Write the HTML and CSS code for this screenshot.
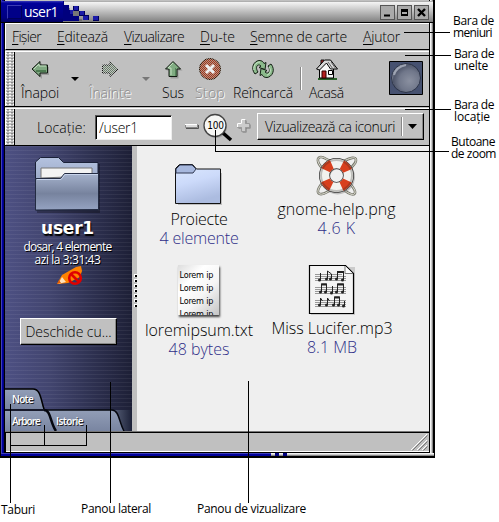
FILE: index.html
```html
<!DOCTYPE html>
<html lang="ro">
<head>
<meta charset="utf-8">
<title>user1</title>
<link rel="stylesheet" href="styles.css">
</head>
<body>
<div class="window">
  <header class="titlebar">
    <div class="title-tab"><i class="title-square"></i><span class="fit" data-w="34">user1</span></div>
    <svg class="title-blocks" width="40" height="20" viewBox="0 0 40 20" shape-rendering="crispEdges">
      <path d="M2 7h5v5h6v6h6v4H0V0z" fill="#555" opacity=".55"/>
      <path d="M0 0h1v4h5v5h4v5h6v6H0z" fill="#00007e"/>
      <path d="M10 5h6v5h-6zM16 10h6v5h-6zM20 14h6v5h-6zM30 15h6v5h-6z" fill="#00005a"/>
      <path d="M11 5h4v4h-4zM17 10h4v4h-4zM20 15h5v4h-5zM30 15h5v4h-5zM7 9h4v4H7z" fill="#1c1ca8"/>
      <path d="M10 10h6v5h-6z" fill="#777"/>
    </svg>
    <div class="win-buttons">
      <svg width="15" height="15"><path d="M4 10.500h6" stroke="#000" stroke-width="2"/></svg>
      <svg width="15" height="15"><path d="M4 4h7v7H4zM5 7v2h5V7z" fill="#000" fill-rule="evenodd"/></svg>
      <svg width="15" height="15"><path d="M4 4l7 7M11 4l-7 7" stroke="#000" stroke-width="2.400"/></svg>
    </div>
  </header>

  <nav class="menubar">
    <span class="fit" data-w="29"><u>F</u>işier</span>
    <span class="fit" data-w="51"><u>E</u>ditează</span>
    <span class="fit" data-w="60"><u>V</u>izualizare</span>
    <span class="fit" data-w="35"><u>D</u>u-te</span>
    <span class="fit" data-w="97"><u>S</u>emne de carte</span>
    <span class="fit" data-w="37"><u>A</u>jutor</span>
  </nav>

  <div class="bar toolbar">
    <div class="grip"></div>
    <div class="tool back">
      <svg width="24" height="24"><path d="M4.500 12.500l8-8v4h7v8h-7v4z" fill="#777" opacity=".5" transform="translate(1.500 1.500)"/><path d="M4 12l8-7.500V8h7.500v8H12v3.500z" fill="#7fa881" stroke="#101810"/><path d="M6 12l5-5v2h7" stroke="#c4dfc2" fill="none"/><path d="M8 14h10" stroke="#4c7a50" stroke-width="2"/></svg>
      <span class="fit" data-w="38">Înapoi</span>
    </div>
    <svg class="caret" width="9" height="5"><path d="M0 0h8L4 4z" fill="#000"/></svg>
    <div class="tool forward off">
      <svg width="24" height="24"><defs><pattern id="dither" width="2" height="2" patternUnits="userSpaceOnUse"><path d="M0 0h1v1H0zM1 1h1v1H1z" fill="#c0c0c0"/></pattern></defs><path d="M20 12l-8-7.500V8H4.500v8H12v3.500z" fill="#688068" stroke="#111"/><path d="M3 3h18v18H3z" fill="url(#dither)" shape-rendering="crispEdges"/></svg>
      <span class="fit" data-w="42">Înainte</span>
    </div>
    <svg class="caret" width="9" height="5"><path d="M0 0h8L4 4z" fill="#777"/></svg>
    <div class="tool up">
      <svg width="24" height="24"><path d="M12 4l8 8h-4v8H8v-8H4z" fill="#777" opacity=".5" transform="translate(1.500 1.500)"/><path d="M12 4.500l7.500 7.500H16v7.500H8V12H4.500z" fill="#80ac82" stroke="#101810"/><path d="M10 18v-7H7l5-5" stroke="#c4dfc2" fill="none"/><path d="M14.500 11v8" stroke="#55845a"/></svg>
      <span class="fit" data-w="22">Sus</span>
    </div>
    <div class="tool stop off">
      <svg width="24" height="24"><circle cx="12" cy="12" r="10.500" fill="#a0381a" stroke="#210"/><path d="M1 1h22v22H1z" fill="url(#dither)" opacity=".65" shape-rendering="crispEdges"/><path d="M8 8l8 8M16 8l-8 8" stroke="#eee" stroke-width="3"/></svg>
      <span class="fit" data-w="30">Stop</span>
    </div>
    <div class="tool reload">
      <svg width="26" height="24"><g stroke="#142014" stroke-linejoin="round"><path d="M5 17C0 11 4 4 9 3.500c3 0 4 1 5 3l2-1-1 7-6-2 2-1.500C8 6 4.500 10 8 15z" fill="#8bba8b"/><path d="M21 7c5 6 1 13-4 13.500-3 0-4-1-5-3l-2 1 1-7 6 2-2 1.500c3 3 6.500-1 3-6z" fill="#8bba8b"/></g><path d="M4 13c-1-4 2-8 6-8M19 10c3 4 0 8-2 8" stroke="#d0e8ce" fill="none"/></svg>
      <span class="fit" data-w="60">Reîncarcă</span>
    </div>
    <i class="rule"></i>
    <div class="tool home">
      <svg width="24" height="24"><path d="M3 21h19v2H3z" fill="#296229"/><path d="M4.500 11v10h14V11l-6-7z" fill="#f8f8f8" stroke="#000"/><path d="M6 3h3v5H6z" fill="#b42020" stroke="#111"/><path d="M1.500 12l8-9h6l7 9h-7l-4-6-7 7z" fill="#d8d8d8" stroke="#000"/><path d="M13 5l5 7M16 5l5 7" stroke="#666"/><path d="M7 14h4v7H7z" fill="#b42020" stroke="#300"/><path d="M13.500 13.500h4v4h-4z" fill="#fff" stroke="#000"/></svg>
      <span class="fit" data-w="35">Acasă</span>
    </div>
    <svg class="throbber" width="34" height="34"><defs><radialGradient id="ball" cx=".62" cy=".6" r=".65"><stop offset="0" stop-color="#8a90a0"/><stop offset=".55" stop-color="#70778a"/><stop offset=".85" stop-color="#4f566a"/><stop offset="1" stop-color="#9aa0b0"/></radialGradient></defs><path d="M.5.500h33v33H.5z" fill="#465170" stroke="#000"/><circle cx="17" cy="17" r="14.500" fill="url(#ball)" stroke="#2c3448"/><path d="M5 14c2-7 7-9 12-10" stroke="#b8bdca" stroke-width="2" fill="none" opacity=".7"/></svg>
  </div>

  <div class="bar location">
    <div class="grip"></div>
    <span class="fit loc-label" data-w="49">Locaţie:</span>
    <div class="field"><span class="fit" data-w="39">/user1</span></div>
    <svg class="minus" width="14" height="5"><path d="M1 4.500h12.500V1" stroke="#555" fill="none"/><path d="M.5.500h12v3H.5z" fill="#ddd" stroke="#888"/><path d="M0 .5h12" stroke="#fff"/></svg>
    <div class="zoom">
      <svg width="32" height="30"><circle cx="13" cy="14" r="11" fill="#777" opacity=".4"/><path d="M20 20l8 7" stroke="#000" stroke-width="3.500"/><circle cx="12" cy="12.500" r="11" fill="#f6f6f4" stroke="#444" stroke-width="1.300"/></svg>
      <span>100</span>
    </div>
    <svg class="plus" width="14" height="14"><path d="M5.500 1.500h4v4h4v4h-4v4h-4v-4h-4v-4h4z" fill="#777"/><path d="M4.500.5h4v4h4v4h-4v4h-4v-4h-4v-4h4z" fill="#ccc" stroke="#999"/><path d="M.5 8V4.500h4V.500h4" fill="none" stroke="#fff"/></svg>
    <div class="view-menu">
      <span class="fit" data-w="130">Vizualizează ca iconuri</span><i></i>
      <svg width="10" height="6"><path d="M0 0h9L4.500 5z" fill="#000"/></svg>
    </div>
  </div>

  <main class="panes">
    <aside class="sidebar">
      <svg class="big-folder" width="68" height="58"><defs><linearGradient id="bf" x2="0" y2="1"><stop offset="0" stop-color="#a6b3cd"/><stop offset=".55" stop-color="#77839e"/><stop offset="1" stop-color="#95a3c2"/></linearGradient><linearGradient id="bb" x2="0" y2="1"><stop offset="0" stop-color="#b4c2df"/><stop offset="1" stop-color="#7e8cac"/></linearGradient></defs>
        <path d="M3 8l5-5h17l4 5h37v49H3z" fill="#000" opacity=".3"/>
        <path d="M1.500 54V6l5-4.500h18l5 5h34.500V54z" fill="url(#bb)" stroke="#1a2138"/><path d="M7 22V12h51v8z" fill="#f3f3f3" stroke="#777"/><path d="M1.500 54V22.500h25l4-5H64.500V53.500z" fill="url(#bf)" stroke="#232b42"/><path d="M3 23.500h24l4-5h33" stroke="#c8d4ec" fill="none"/></svg>
      <h1><span class="fit" data-w="53">user1</span></h1>
      <p><span class="fit" data-w="88">dosar, 4 elemente</span></p>
      <p><span class="fit" data-w="66">azi la 3:31:43</span></p>
      <svg class="pencil" width="26" height="20"><path d="M0 18L5 9 19 1l5-1 1 5-2 6-12 6z" fill="#ff8200"/><path d="M1 18l4-7 4 5z" fill="#ffe3bd"/><path d="M0 18l2-4 2 3z" fill="#e65c00"/><circle cx="18" cy="12" r="5.800" fill="none" stroke="#e00000" stroke-width="2.600"/><path d="M14 8l8 8" stroke="#e00000" stroke-width="2.500"/></svg>
      <button class="open-with"><span class="fit" data-w="86">Deschide cu...</span></button>
      <div class="tabs">
        <svg width="127" height="43"><defs><linearGradient id="tb" x2="0" y2="1"><stop offset="0" stop-color="#929eb7"/><stop offset="1" stop-color="#7985a1"/></linearGradient><linearGradient id="te"><stop offset="0" stop-color="#59627a"/><stop offset="1" stop-color="#1c2138"/></linearGradient></defs>
          <path d="M108 22h19v21h-19z" fill="url(#te)"/>
          <path d="M0 1h28c8 0 8 12 11 20H0z" fill="url(#tb)"/><path d="M0 1h28c8 0 8 12 11 20" fill="none" stroke="#000" stroke-width="1.500"/>
          <path d="M40 22h67c7 0 7 12 12 21H40z" fill="url(#tb)"/><path d="M0 22h107c7 0 7 12 12 21" fill="none" stroke="#05070f" stroke-width="1.500"/>
          <path d="M0 23h39c7 0 6 12 11 20H0z" fill="url(#tb)"/><path d="M39 22c7 0 6 13 12 21" fill="none" stroke="#05070f" stroke-width="2.500"/></svg>
        <div class="tab-row"><span class="fit" data-w="21">Note</span></div>
        <div class="tab-row lower"><span class="fit" data-w="28">Arbore</span><span class="fit" data-w="27">Istorie</span></div>
      </div>
    </aside>
    <div class="splitter"><i></i><i></i><i></i><i></i><i></i><i></i><i></i></div>
    <section class="files">
      <div class="column first">
        <figure>
          <svg width="50" height="44"><defs><linearGradient id="fo" x2=".3" y2="1"><stop offset="0" stop-color="#dce9ff"/><stop offset=".5" stop-color="#ccdafa"/><stop offset="1" stop-color="#acbce0"/></linearGradient></defs><path d="M4 9h44v32H4z" fill="#777" opacity=".4"/><path d="M1.500 39.500v-35l4-4h13l4 4.500h24v34.500z" fill="url(#fo)" stroke="#111"/><path d="M2 9h17l3-4-4-4H6L2 5z" fill="#a7b8de" stroke="#303952"/></svg>
          <figcaption><span class="fit" data-w="57">Proiecte</span><small class="fit" data-w="79">4 elemente</small></figcaption>
        </figure>
        <figure class="text-file">
          <div class="sheet"><b>Lorem ip</b><b>Lorem ip</b><b>Lorem ip</b><b>Lorem ip</b></div>
          <figcaption><span class="fit" data-w="108">loremipsum.txt</span><small class="fit" data-w="61">48 bytes</small></figcaption>
        </figure>
      </div>
      <div class="column second">
        <figure>
          <svg width="44" height="44" viewBox="0 0 44 44"><path d="M8 14C1 7 2 2 6 2s5 3 10 4M29 6c6-3 12-5 12-1s-4 6-6 9M8 27c-5 6-7 11-3 12s8-3 11-4M29 35c5 4 10 6 11 3s-4-8-6-11" fill="none" stroke="#77776c" stroke-width="2.600"/><path d="M8 14C1 7 2 2 6 2s5 3 10 4M29 6c6-3 12-5 12-1s-4 6-6 9M8 27c-5 6-7 11-3 12s8-3 11-4M29 35c5 4 10 6 11 3s-4-8-6-11" fill="none" stroke="#e4e4d8"/>
            <circle cx="22.500" cy="22" r="12.500" fill="none" stroke="#777" stroke-width="10" opacity=".4"/><circle cx="21.500" cy="20.500" r="12" fill="none" stroke="#333" stroke-width="11"/><circle cx="21.500" cy="20.500" r="12" fill="none" stroke="#f2f2ee" stroke-width="9.500"/><circle cx="21.500" cy="20.500" r="12" fill="none" stroke="#d8401e" stroke-width="9.500" stroke-dasharray="8.500 10.350" stroke-dashoffset="-5.200"/><circle cx="21.500" cy="20.500" r="15.500" fill="none" stroke="#222" stroke-width="2" opacity=".25"/></svg>
          <figcaption><span class="fit" data-w="118">gnome-help.png</span><small class="fit" data-w="38">4.6 K</small></figcaption>
        </figure>
        <figure class="music-file">
          <svg width="48" height="52"><path d="M3 3h44v48H3z" fill="#777" opacity=".3"/><path d="M1.500 1.500h36l8 8v40h-44z" fill="#f4f4f4" stroke="#000" stroke-width="1.200"/><path d="M37 2v7.500h8" fill="#fff" stroke="#777"/><path d="M7 10.500h27M7 12.500h31M7 14.500h31M7 16.500h31M7 23.500h31M7 25.500h31M7 27.500h31M7 29.500h31M7 36.500h31M7 38.500h31M7 40.500h31M7 42.500h31" stroke="#999"/>
            <g stroke="#222" fill="none"><path d="M12.500 16V9M19.500 15V7l4 3v5M29.500 15V8h6v8M13.500 28v-8h5v8M24.500 29v-7M29.500 28v-8h6v8M12.500 41v-7l2 3M19.500 41v-7l2 3M26.500 41v-8h5v8M36.500 42v-5"/><path d="M29 8h7M13 20.500h6M29 20.500h7M26 33.500h6" stroke-width="2"/></g>
            <g fill="#222"><circle cx="11.500" cy="16" r="1.500"/><circle cx="18.500" cy="15" r="1.500"/><circle cx="22.500" cy="15" r="1.500"/><circle cx="28.500" cy="15" r="1.500"/><circle cx="34.500" cy="16" r="1.500"/><circle cx="12.500" cy="28" r="1.500"/><circle cx="17.500" cy="28" r="1.500"/><circle cx="23.500" cy="29" r="1.500"/><circle cx="28.500" cy="28" r="1.500"/><circle cx="34.500" cy="28" r="1.500"/><circle cx="11.500" cy="41" r="1.500"/><circle cx="18.500" cy="41" r="1.500"/><circle cx="25.500" cy="41" r="1.500"/><circle cx="30.500" cy="41" r="1.500"/><circle cx="35.500" cy="42" r="1.500"/></g></svg>
          <figcaption><span class="fit" data-w="121">Miss Lucifer.mp3</span><small class="fit" data-w="50">8.1 MB</small></figcaption>
        </figure>
      </div>
    </section>
  </main>
  <footer class="status"><svg width="18" height="18"><path d="M1 17L17 1M7 17L17 7M12 17l5-5" stroke="#fff"/><path d="M2.500 17.500l15-15M8.500 17.500l9-9M13.500 17.500l4-4" stroke="#777"/></svg></footer>
  <div class="frame-bottom"><i></i><i></i><i></i></div>
</div>

<svg class="leaders" width="499" height="522" shape-rendering="crispEdges"><path d="M404 32.500h46M405 55.500h46M405 109.500h46M215.500 130v21.500H449M10.500 404v99M110.500 382v121M248.500 381v122M10 445.500h77M44.500 425v21M86.500 425v21" fill="none" stroke="#000"/></svg>
<div class="note n1"><span class="fit" data-w="41">Bara de</span><br><span class="fit" data-w="39">meniuri</span></div>
<div class="note n2"><span class="fit" data-w="40">Bara de</span><br><span class="fit" data-w="34">unelte</span></div>
<div class="note n3"><span class="fit" data-w="40">Bara de</span><br><span class="fit" data-w="36">locaţie</span></div>
<div class="note n4"><span class="fit" data-w="44">Butoane</span><br><span class="fit" data-w="45">de zoom</span></div>
<div class="note n5"><span class="fit" data-w="34">Taburi</span></div>
<div class="note n6"><span class="fit" data-w="70">Panou lateral</span></div>
<div class="note n7"><span class="fit" data-w="109">Panou de vizualizare</span></div>
<script src="fit.js"></script>
</body>
</html>
```
FILE: styles.css
```css
* { box-sizing: border-box; }
body {
  margin: 0;
  width: 499px;
  height: 522px;
  overflow: hidden;
  position: relative;
  background: #fff;
  color: #000;
  font: 300 14px/18px "Open Sans", "Noto Sans", sans-serif;
}
svg { display: block; flex: none; }
.fit { display: inline-block; white-space: nowrap; flex: none; }

.window {
  width: 435px;
  height: 458px;
  padding: 1px 6px 0 5px;
  background: linear-gradient(90deg, #000 0 1px, #4040b8 1px 2px, #0000a0 2px 3px, #00007e 3px 4px, #000 4px 5px, #c0c0c0 5px 429px, #000 429px 430px, #f4f4f4 430px 431px, #ccc 431px 432px, #888 432px 433px, #000 433px);
}
.titlebar {
  height: 22px;
  margin: 0 -4px 0 -4px;
  display: flex;
  background: linear-gradient(#8c8c8c, #f2f2f2 7%, #d0d0d0 35%, #8a8a8a 92%, #777);
  border-bottom: 1px solid #000;
}
.title-tab {
  width: 62px;
  padding: 1px 0 0 6px;
  display: flex;
  gap: 2px;
  color: #fff;
  line-height: 19px;
  font-weight: 400;
  background: linear-gradient(#3a3ab8, #00009a 10%, #000080 80%, #000060);
}
.title-square { width: 15px; height: 14px; margin-top: 3px; background: #000088; border: 1px solid #00005a; border-top-color: #3a3ab4; border-left-color: #3a3ab4; }
.win-buttons { margin: 4px 4px 0 auto; display: flex; gap: 2px; }
.win-buttons svg { background: #aaa; box-shadow: inset 1px 1px #eee, inset -1px -1px #555; outline: 1px solid #555; outline-offset: -1px; }

.menubar {
  height: 27px;
  padding-left: 6px;
  display: flex;
  line-height: 26px;
  border: 1px solid #fff;
  border-width: 1px 0 0 1px;
  border-bottom: 1px solid #000;
}
.menubar span { margin-right: 16px; }
.menubar span:nth-child(4) { margin-right: 15px; }
.menubar u { text-underline-offset: 2px; text-decoration-thickness: 1px; }

.bar {
  display: flex;
  align-items: flex-start;
  border-top: 1px solid #fff;
  border-bottom: 1px solid #000;
  background: #c0c0c0;
}
.toolbar { margin-top: 1px; height: 56px; }
.location { margin-top: 1px; height: 38px; }
.grip {
  width: 10px;
  flex: none;
  align-self: stretch;
  margin-right: 6px;
  border-left: 1px solid #fff;
  border-right: 1px solid #000;
  background: conic-gradient(#fff 25%, #c0c0c0 0 50%, #888 0 75%, #c0c0c0 0) 1px 1px / 4px 3px;
}
.tool { display: flex; flex-direction: column; align-items: center; padding-top: 5px; flex: none; }
.tool span { margin-top: 3px; }
.off { color: #8c8c8c; text-shadow: 1px 1px #fff; }
.caret { margin: 25px 0 0 12px; }
.toolbar .forward + .caret { margin-left: 11px; }
.forward { margin-left: 9px; }
.up { margin-left: 10px; }
.stop { margin-left: 10px; }
.reload { margin-left: 8px; }
.rule { width: 2px; height: 23px; margin: 15px 0 0 7px; flex: none; background: linear-gradient(90deg, #888 50%, #fff 50%); }
.home { margin-left: 7px; }
.throbber { margin: 9px 6px 0 auto; }

.loc-label { margin: 10px 0 0 16px; }
.field {
  width: 77px;
  height: 25px;
  margin: 6px 0 0 9px;
  padding: 3px 0 0 3px;
  background: #fff;
  border: 1px solid #eee;
  border-top-color: #555;
  border-left-color: #555;
  box-shadow: inset 1px 1px #000;
}
.minus { margin: 15px 0 0 13px; }
.zoom { display: grid; margin: 4px 0 0 4px; width: 32px; }
.zoom > * { grid-area: 1 / 1; }
.zoom span { width: 25px; text-align: center; font: 10px/25px "DejaVu Sans Condensed", "DejaVu Sans", sans-serif; letter-spacing: -.3px; }
.plus { margin: 10px 0 0 2px; }
.view-menu {
  width: 167px;
  height: 27px;
  margin: 4px 0 0 6px;
  padding-left: 7px;
  display: flex;
  align-items: center;
  border: 1px solid #000;
  border-top-color: #fff;
  border-left-color: #fff;
  box-shadow: inset -1px -1px #888;
}
.view-menu i { width: 2px; height: 19px; margin: 0 5px 0 6px; background: linear-gradient(90deg, #888 50%, #fff 50%); }

.panes { height: 285px; display: flex; }
.sidebar {
  width: 127px;
  display: flex;
  flex-direction: column;
  align-items: center;
  color: #fff;
  background: repeating-linear-gradient(rgba(255,255,255,.06) 0 1px, transparent 1px 4px), linear-gradient(90deg, #4d5083, #42456f 35%, #303354 65%, #1d1f36);
}
.big-folder { margin: 10px 0 0 -2px; }
.sidebar h1 { margin: 3px 0 0 -2px; font: bold 17px/22px "DejaVu Sans", sans-serif; text-shadow: 1px 2px 1px #000; }
.sidebar p { margin: 0 0 0 -2px; font-size: 12px; font-weight: 400; line-height: 13px; text-shadow: 1px 1px #000; }
.sidebar h1 + p { margin-top: 1px; }
.pencil { margin: 0 0 0 2px; }
.open-with {
  width: 97px;
  height: 27px;
  margin: 32px 0 0 0;
  padding: 0;
  font: inherit;
  color: #000;
  background: #c0c0c0;
  border: 1px solid #000;
  border-top-color: #fff;
  border-left-color: #fff;
  box-shadow: inset -1px -1px #888;
}
.tabs { width: 127px; height: 43px; margin-top: auto; display: grid; grid-template-rows: 22px 21px; font: 600 10px/22px "Open Sans", sans-serif; text-shadow: 1px 1px #222; }
.tabs svg { grid-area: 1 / 1 / 3 / 2; }
.tab-row { grid-area: 1 / 1; padding-left: 7px; display: flex; }
.lower { grid-area: 2 / 1; gap: 16px; }
.splitter { width: 5px; padding: 128px 0 0 2px; background: #c0c0c0; display: flex; flex-direction: column; gap: 2px; }
.splitter i { width: 3px; height: 3px; background: #000; box-shadow: inset 1px 1px #fff; }
.files { flex: 1; display: flex; background: #efefef; }
.column { display: flex; flex-direction: column; align-items: center; flex: none; }
.first { width: 124px; padding-top: 18px; }
.second { width: 151px; padding-top: 9px; }
figure { margin: 0; display: flex; flex-direction: column; align-items: center; }
figcaption { display: flex; flex-direction: column; align-items: center; font-size: 16px; line-height: 19px; }
small { font-size: 16px; color: #303088; }
.first figure:first-child figcaption { margin-top: 2px; }
.text-file { margin-top: 17px; }
.sheet { width: 41px; height: 50px; padding: 4px 0 0 1px; overflow: hidden; background: linear-gradient(135deg, #ddd, #fff 30%, #f5f5f5 60%, #c4c4c4); box-shadow: 1px 2px 2px #444; }
.sheet b { display: block; white-space: nowrap; font: 9px/13px "DejaVu Sans Condensed", "DejaVu Sans", sans-serif; letter-spacing: -.2px; }
.text-file figcaption { margin-top: 6px; }
.second figure:first-child figcaption { margin-top: 1px; }
.music-file { margin: 26px 9px 0 0; }
.music-file figcaption { margin-top: 3px; }

.status {
  height: 22px;
  padding: 1px 1px 0 0;
  display: flex;
  justify-content: flex-end;
  border-top: 1px solid #777;
  border-bottom: 1px solid #000;
  box-shadow: inset 0 1px #000, inset 1px 0 #000, inset 0 -1px #fff;
}
.frame-bottom {
  height: 5px;
  margin: 0 -5px 0 -4px;
  display: flex;
  gap: 4px;
  background: linear-gradient(#f4f4f4 0 1px, #ccc 1px 2px, #888 2px 3px, #000 3px);
}
.frame-bottom i { width: 4px; height: 3px; background: #00007e; }
.frame-bottom i:first-child { width: 270px; background: linear-gradient(#4040b8 0 1px, #00009a 1px); }

.leaders { position: absolute; left: 0; top: 0; }
.note { position: absolute; font-size: 12px; line-height: 12px; font-weight: 400; white-space: nowrap; }
.n1 { left: 453px; top: 15px; }
.n2 { left: 454px; top: 48px; }
.n3 { left: 454px; top: 99px; }
.n4 { left: 451px; top: 136px; }
.n5 { left: 1px; top: 504px; }
.n6 { left: 81px; top: 503px; }
.n7 { left: 197px; top: 503px; }
```
FILE: fit.js
```js
// Tracks each label so that it fills its designed width.
document.querySelectorAll('.fit').forEach(function (el) {
  var natural = el.getBoundingClientRect().width;
  var count = el.textContent.length;
  el.style.letterSpacing = ((el.dataset.w - natural) / count) + 'px';
});
```
